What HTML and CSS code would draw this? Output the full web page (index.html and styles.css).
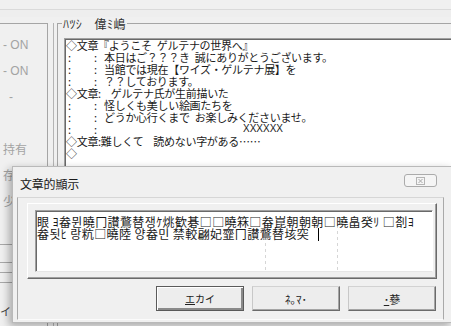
FILE: index.html
```html
<!DOCTYPE html>
<html lang="ja">
<head>
    <meta charset="UTF-8">
    <title>文章的顯示</title>
    <link rel="stylesheet" href="styles.css">
</head>
<body>
    <div class="top-strip"></div>
    <div class="tab-strip"></div>

    <div class="workspace">
        <div class="side-panel">
            <div class="side-row">- ON</div>
            <div class="side-row">- ON</div>
            <div class="side-row dash">-</div>
            <div class="side-row"></div>
            <div class="side-row cjk">持有</div>
            <div class="side-row cjk">存</div>
            <div class="side-row cjk short">少</div>
            <div class="side-list">
                <div class="side-line tall"></div>
                <div class="side-line"></div>
                <div class="side-line"></div>
                <div class="side-foot cjk">イ</div>
            </div>
        </div>

        <div class="side-rule"></div>

        <fieldset class="script-group">
            <legend>ﾊﾂｼ　偉ﾐ嶋</legend>
            <div class="script-view">
                <div class="line">◇文章『ようこそ&ensp;ゲルテナの世界へ』</div>
                <div class="line"><span class="tick-a">:</span><span class="tick-b">:</span><span>本日はご？？？き&ensp;誠にありがとうございます。</span></div>
                <div class="line"><span class="tick-a">:</span><span class="tick-b">:</span><span>当館では現在【ワイズ・ゲルテナ展】を</span></div>
                <div class="line"><span class="tick-a">:</span><span class="tick-b">:</span><span>？？しております。</span></div>
                <div class="line"><span>◇文章:</span><span class="after-label">ゲルテナ氏が生前描いた</span></div>
                <div class="line"><span class="tick-a">:</span><span class="tick-b">:</span><span>怪しくも美しい絵画たちを</span></div>
                <div class="line"><span class="tick-a">:</span><span class="tick-b">:</span><span>どうか心行くまで&ensp;お楽しみくださいませ。</span></div>
                <div class="line"><span class="tick-a">:</span><span class="tick-b">:</span><span class="marks">XXXXXX</span></div>
                <div class="line"><span>◇文章:難しくて</span><span class="after-label">読めない字がある……</span></div>
                <div class="line">◇</div>
            </div>
        </fieldset>
    </div>

    <!-- message dialog -->
    <div class="dialog">
        <div class="dialog-title-bar">
            <span class="dialog-title">文章的顯示</span>
            <div class="close-btn">
                <svg width="9" height="8" viewBox="0 0 9 8">
                    <rect x="0.5" y="0.5" width="8" height="7" fill="none" stroke="#b4b4b4"/>
                    <path d="M2.5 2 L6.5 6 M6.5 2 L2.5 6" stroke="#a8a8a8" stroke-width="1"/>
                </svg>
            </div>
        </div>

        <div class="dialog-panel">
            <div class="edit-frame">
                <div class="edit-box">
                    <div class="edit-line">眼 ﾖ畚뮌曉冂讃鶩替쟁ｹ烑歓碁□□曉箖□畚崑朝朝朝□曉畠癸ﾘ □剳ﾖ</div>
                    <div class="edit-line">畚됫ﾋ 랑粇□曉陸 양畚민 禁較翩妃韲冂讃鶩替垓突 <span class="caret"></span></div>
                </div>
            </div>

            <div class="btn-row">
                <div class="btn default"><u>エ</u>カイ</div>
                <div class="btn">ﾈ｡ﾏ･</div>
                <div class="btn"><u>･</u>蔘</div>
            </div>
        </div>
    </div>
</body>
</html>
```

FILE: styles.css
```css
* {
    box-sizing: border-box;
}

body {
    margin: 0;
    width: 451px;
    height: 326px;
    overflow: hidden;
    position: relative;
    background-color: #f0f0f0;
    font-family: "Noto Sans CJK JP", "Liberation Sans", sans-serif;
    color: #1e1e1e;
}

.top-strip {
    height: 10px;
    border-bottom: 1px solid #dadada;
}

.tab-strip {
    height: 7px;
    background-color: #eeeeee;
}

.workspace {
    display: flex;
    height: 309px;
}

/* left side list */

.side-panel {
    width: 48px;
    margin-top: 6px;
    border-top: 1px solid #a5a5a5;
    border-right: 1px solid #a5a5a5;
    padding-top: 8px;
    display: flex;
    flex-direction: column;
    color: #a3a3a3;
    font-family: "Liberation Sans", sans-serif;
    font-size: 12px;
}

.side-row {
    height: 26px;
    line-height: 26px;
    padding-left: 3px;
    white-space: nowrap;
}

.side-row.dash {
    padding-left: 9px;
}

.side-row.short {
    height: 22px;
}

.cjk {
    font-family: "Noto Sans CJK JP", sans-serif;
}

.side-list {
    margin-top: 34px;
}

.side-line {
    height: 10px;
    border-top: 1px solid #a8a8a8;
}

.side-line.tall {
    height: 18px;
}

.side-foot {
    border-top: 1px solid #a8a8a8;
    padding-top: 20px;
    font-size: 11px;
    color: #444;
}

.side-rule {
    width: 1px;
    margin: 6px 0 0 5px;
    background-color: #b4b4b4;
}

/* script group */

.script-group {
    flex: 1;
    min-width: 0;
    margin: 0 0 0 3px;
    padding: 8px 0 0 6px;
    border: 1px solid #a5a5a5;
    border-right: none;
    border-bottom: none;
}

.script-group legend {
    margin-left: -2px;
    padding: 0 1px;
    font-size: 12px;
    line-height: 13px;
    letter-spacing: 0.4px;
    color: #303030;
}

.script-view {
    height: 150px;
    background-color: #fff;
    border-top: 1px solid #a0a0a0;
    border-left: 1px solid #a0a0a0;
    box-shadow: inset 1px 1px #696969;
    padding: 0 0 0 1px;
    font-size: 11px;
    line-height: 12px;
    color: #1a1a1a;
}

.line {
    display: flex;
    height: 12px;
    white-space: pre;
    letter-spacing: -0.3px;
}

.tick-a {
    width: 28px;
    padding-left: 2px;
}

.tick-b {
    width: 10px;
}

.after-label {
    margin-left: 10px;
}

.marks {
    margin-left: 139px;
    font-family: "Liberation Sans", sans-serif;
    font-size: 10px;
    letter-spacing: 0;
}

/* dialog */

.dialog {
    position: absolute;
    left: 12px;
    top: 166px;
    width: 441px;
    height: 157px;
    padding: 0 4px;
    background-color: #f0f0f0;
    border: 1px solid #b9b9b9;
    box-shadow: -3px 3px 8px rgba(0, 0, 0, 0.3);
}

.dialog-title-bar {
    height: 30px;
    padding: 3px 0 0 3px;
    display: flex;
    align-items: center;
    justify-content: space-between;
}

.dialog-title {
    font-size: 12px;
    letter-spacing: -0.2px;
    color: #1a1a1a;
}

.close-btn {
    width: 33px;
    height: 13px;
    margin: -6px 11px 0 0;
    border: 1px solid #ababab;
    border-radius: 3px;
    background-color: #f5f5f5;
    display: flex;
    align-items: center;
    justify-content: center;
}

.dialog-panel {
    width: 427px;
    height: 123px;
    padding: 5px 6px 0 9px;
    border: 1px solid #a9a9a9;
    border-top-color: #d6d6d6;
    border-bottom-color: #fbfbfb;
}

.edit-frame {
    height: 76px;
    padding: 6px 0 0 7px;
    border: 1px solid;
    border-color: #fff #6a6a6a #6a6a6a #fff;
    box-shadow: inset -1px -1px #a0a0a0;
}

.edit-box {
    width: 398px;
    height: 62px;
    padding: 5px 0 0 1px;
    background-color: #fff;
    border: 1px solid;
    border-color: #a0a0a0 #fff #e6e6e6 #a0a0a0;
    box-shadow: inset 1px 1px #696969;
    background-image:
        repeating-linear-gradient(to bottom, #d6d6d6 0 3px, transparent 3px 6px),
        repeating-linear-gradient(to bottom, #d6d6d6 0 3px, transparent 3px 6px);
    background-size: 1px 46px, 1px 46px;
    background-position: 229px 14px, 301px 14px;
    background-repeat: no-repeat;
    font-size: 12px;
    line-height: 12px;
    letter-spacing: 0.4px;
    color: #1a1a1a;
}

.edit-line {
    white-space: nowrap;
    height: 12px;
}

.caret {
    display: inline-block;
    width: 1px;
    height: 13px;
    margin-left: 6px;
    vertical-align: -2px;
    background-color: #000;
}

.btn-row {
    display: flex;
    justify-content: flex-end;
    gap: 8px;
    margin-top: 7px;
    padding-right: 1px;
}

.btn {
    width: 88px;
    height: 25px;
    display: flex;
    align-items: center;
    justify-content: center;
    background-color: #ededed;
    border: 1px solid;
    border-color: #d2d2d2 #6b6b6b #6b6b6b #c8c8c8;
    box-shadow: inset -1px -1px #a5a5a5;
    font-size: 11px;
    color: #222;
}

.btn.default {
    border-color: #5a5a5a;
    box-shadow: inset 1px 1px #fff, inset -2px -2px #8a8a8a;
    font-size: 10px;
}
```
